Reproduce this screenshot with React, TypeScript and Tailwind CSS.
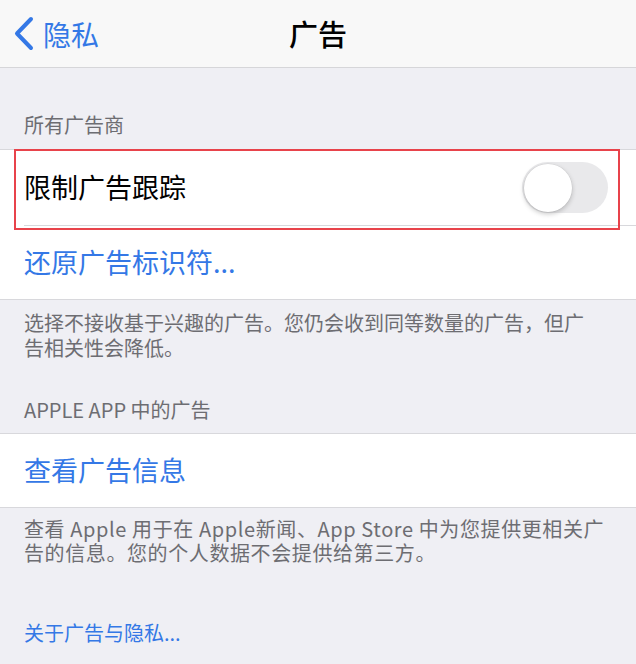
import React, { useState } from "react";

const font = { fontFamily: '"Noto Sans CJK SC", "Noto Sans", sans-serif' };

function Toggle({ on, onChange }: { on: boolean; onChange: (v: boolean) => void }) {
  return (
    <button
      type="button"
      onClick={() => onChange(!on)}
      className={`relative h-[51px] w-[86px] rounded-full transition-colors ${
        on ? "bg-[#34c759]" : "bg-[#e9e9eb]"
      }`}
    >
      <span
        className={`absolute top-[1.5px] h-[48px] w-[48px] rounded-full bg-white shadow-[0_2px_5px_rgba(0,0,0,0.22),0_0_0_0.5px_rgba(0,0,0,0.06)] transition-all ${
          on ? "left-[36px]" : "left-[1.5px]"
        }`}
      />
    </button>
  );
}

export default function App() {
  const [limit, setLimit] = useState(false);

  return (
    <div style={font} className="min-h-[664px] w-[636px] bg-[#efeff4]">
      {/* nav bar */}
      <div className="grid h-[68px] grid-cols-3 items-center border-b border-[#d6d6d9] bg-[#f8f8f8]">
        <div className="flex items-center gap-[9px] pl-[13px] text-[#3478e6]">
          <svg width="21" height="35" viewBox="0 0 21 35" fill="none">
            <path
              d="M18 3 L4 17.5 L18 32"
              stroke="currentColor"
              strokeWidth="4"
              strokeLinecap="round"
              strokeLinejoin="round"
            />
          </svg>
          <span className="text-[28px] leading-none">隐私</span>
        </div>
        <div className="text-center text-[29px] font-medium leading-none text-black">广告</div>
        <div />
      </div>

      {/* section header */}
      <div className="px-6 pt-[43px] pb-[10px] text-[20px] leading-[28px] text-[#6d6d72]">所有广告商</div>

      <div className="border-y border-[#d8d8dc] bg-white">
        <div className="relative flex h-[75px] items-center justify-between pl-6 pr-[28px]">
          <span className="text-[27px] text-black">限制广告跟踪</span>
          <Toggle on={limit} onChange={setLimit} />
          <div className="pointer-events-none absolute top-[-1px] right-[16px] bottom-[-5px] left-[14px] border-2 border-[#e8434b]" />
        </div>
        <div className="ml-6 h-px bg-[#d8d8dc]" />
        <div className="flex h-[73px] items-center pl-6">
          <span className="text-[27px] text-[#3478e6]">还原广告标识符...</span>
        </div>
      </div>

      <p className="px-6 pt-[10px] text-[20px] leading-[25px] whitespace-nowrap text-[#6d6d72]">
        选择不接收基于兴趣的广告。您仍会收到同等数量的广告，但广
        <br />
        告相关性会降低。
      </p>

      <div className="px-6 pt-[37px] pb-[10px] text-[20px] leading-[26px] text-[#6d6d72]">APPLE APP 中的广告</div>

      <div className="border-y border-[#d8d8dc] bg-white">
        <div className="flex h-[73px] items-center pl-6">
          <span className="text-[27px] text-[#3478e6]">查看广告信息</span>
        </div>
      </div>

      <p className="px-6 pt-[9px] text-[20px] leading-[24px] tracking-[0.6px] whitespace-nowrap text-[#6d6d72]">
        查看 Apple 用于在 Apple新闻、App Store 中为您提供更相关广
        <br />
        告的信息。您的个人数据不会提供给第三方。
      </p>

      <div className="px-6 pt-[55px] text-[20px] leading-[26px] text-[#3478e6]">关于广告与隐私...</div>
    </div>
  );
}
